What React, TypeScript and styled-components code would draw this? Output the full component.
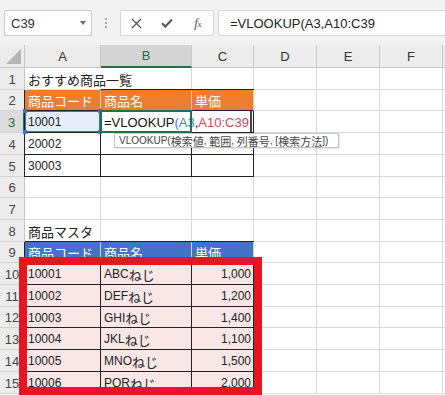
import React from 'react';
import styled, { createGlobalStyle, css } from 'styled-components';

const Global = createGlobalStyle`
  html, body { margin: 0; padding: 0; background: #fff; overflow: hidden; }
  body { width: 445px; height: 395px; }
`;

const Page = styled.div`
  position: relative;
  width: 445px;
  height: 395px;
  overflow: hidden;
  background: #fff;
  font-family: "Liberation Sans", "Noto Sans CJK JP", sans-serif;
  color: #222;
`;

/* ---------- formula bar ---------- */
const Toolbar = styled.div`
  display: flex;
  align-items: stretch;
  height: 45px;
  box-sizing: border-box;
  padding: 10px 0 9px 4px;
  background: #f2f2f2;
`;

const NameBox = styled.div`
  width: 88px;
  box-sizing: border-box;
  display: flex;
  align-items: center;
  justify-content: space-between;
  padding: 0 5px 0 6px;
  background: #fff;
  border: 1px solid #cdcdcd;
  font-size: 13px;
  color: #333;
`;

const Caret = styled.span`
  width: 0;
  height: 0;
  border-left: 3.5px solid transparent;
  border-right: 3.5px solid transparent;
  border-top: 4px solid #666;
`;

const Grip = styled.div`
  width: 28px;
  display: flex;
  align-items: center;
  justify-content: center;
  &::before {
    content: "";
    width: 0;
    height: 10px;
    border-left: 2px dotted #a8a8a8;
  }
`;

const FxBox = styled.div`
  width: 94px;
  box-sizing: border-box;
  display: flex;
  align-items: center;
  background: #fff;
  border: 1px solid #d6d6d6;
`;

const IconSlot = styled.span`
  width: 31px;
  display: flex;
  align-items: center;
  justify-content: center;
  color: #555;
`;

const Fx = styled.span`
  font-family: "Liberation Serif", serif;
  font-style: italic;
  font-size: 13px;
  color: #555;
  letter-spacing: -0.5px;
  & > small { font-size: 9px; }
`;

const FormulaInput = styled.div`
  flex: 1;
  margin-left: 4px;
  display: flex;
  align-items: center;
  padding-left: 11px;
  background: #fff;
  border: 1px solid #d6d6d6;
  border-right: none;
  font-size: 13px;
  color: #222;
  white-space: nowrap;
`;

/* ---------- sheet ---------- */
const Sheet = styled.div`
  display: grid;
  grid-template-columns: 25px 76px 91px 62px 63px 63px 63px 40px;
  grid-template-rows: 23px 22px 21px 22px 22px 22px 21px 22px 22px 21px 22px 22px 21px 22px 22px 22px;
`;

const Corner = styled.div`
  box-sizing: border-box;
  background: #ececec;
  border-right: 1px solid #c4c4c4;
  border-bottom: 1px solid #c4c4c4;
  display: flex;
  align-items: flex-end;
  justify-content: flex-end;
  padding: 0 3px 3px 0;
`;

const ColHead = styled.div<{ $sel?: boolean }>`
  box-sizing: border-box;
  display: flex;
  align-items: center;
  justify-content: center;
  font-size: 13px;
  color: ${p => (p.$sel ? '#1e6b40' : '#333')};
  background: ${p => (p.$sel ? '#d4d4d4' : '#ececec')};
  border-right: 1px solid #c9c9c9;
  border-bottom: ${p => (p.$sel ? '2px solid #217346' : '1px solid #c4c4c4')};
`;

const RowHead = styled.div<{ $sel?: boolean }>`
  box-sizing: border-box;
  display: flex;
  align-items: center;
  justify-content: center;
  padding-top: 1px;
  font-size: 13px;
  color: ${p => (p.$sel ? '#1e6b40' : '#444')};
  background: ${p => (p.$sel ? '#dcdcdc' : '#ececec')};
  border-right: ${p => (p.$sel ? '2px solid #217346' : '1px solid #c4c4c4')};
  border-bottom: 1px solid #d2d2d2;
`;

type Kind = 'plain' | 'orange' | 'table' | 'blue' | 'pink';

const kindStyle: Record<Kind, ReturnType<typeof css>> = {
  plain: css`
    background: #fff;
    border-right: 1px solid #d9d9d9;
    border-bottom: 1px solid #d9d9d9;
  `,
  orange: css`
    background: #ed7d31;
    color: #fff;
    border-right: 1px solid #f7c9a8;
    border-bottom: 1px solid #222;
  `,
  table: css`
    background: #fff;
    border-right: 1px solid #222;
    border-bottom: 1px solid #222;
  `,
  blue: css`
    background: #4472c4;
    color: #fff;
    border-right: 1px solid #c7d4ee;
    border-bottom: 1px solid #222;
  `,
  pink: css`
    background: #f9e6e6;
    border-right: 1px solid #222;
    border-bottom: 1px solid #222;
  `,
};

const Cell = styled.div<{
  $kind: Kind;
  $edgeL?: boolean;
  $edgeT?: boolean;
  $right?: boolean;
  $sel?: boolean;
  $spill?: boolean;
}>`
  box-sizing: border-box;
  display: flex;
  align-items: center;
  justify-content: ${p => (p.$right ? 'flex-end' : 'flex-start')};
  padding: 1px 2px 0 3px;
  font-size: 12px;
  white-space: nowrap;
  ${p => kindStyle[p.$kind]}
  ${p => {
    const shadows: string[] = [];
    if (p.$edgeL) shadows.push('-1px 0 0 #222');
    if (p.$edgeT) shadows.push('0 -1px 0 #222');
    if (p.$sel) shadows.push('inset 0 0 0 1px #3f6fc2');
    return shadows.length ? `box-shadow: ${shadows.join(', ')};` : '';
  }}
  ${p => p.$sel && css`
    position: relative;
    background: #e7edf8;
  `}
  ${p => p.$spill && css`
    z-index: 1;
    background: transparent;
    border-right-color: transparent;
  `}
`;

const Jp = styled.span<{ $size?: number }>`
  font-family: "Noto Sans CJK JP", sans-serif;
  font-size: ${p => p.$size ?? 13}px;
`;

const Handle = styled.span<{ $v: 'top' | 'bottom'; $h: 'left' | 'right' }>`
  position: absolute;
  width: 4px;
  height: 4px;
  background: #3f6fc2;
  ${p => (p.$v === 'top' ? 'top: -2px;' : 'bottom: -2px;')}
  ${p => (p.$h === 'left' ? 'left: -2px;' : 'right: -2px;')}
`;

const EditCell = styled.div`
  position: relative;
  box-sizing: border-box;
  border-right: 1px solid #222;
  border-bottom: 1px solid #222;
  &::after {
    content: "";
    position: absolute;
    left: -1px;
    top: -1px;
    width: 92px;
    height: 23px;
    box-sizing: border-box;
    border: 2px solid #217346;
    z-index: 3;
    pointer-events: none;
  }
`;

const Editor = styled.div`
  position: absolute;
  left: 0;
  top: 0;
  height: 100%;
  width: 151px;
  box-sizing: border-box;
  display: flex;
  align-items: center;
  padding: 1px 0 0 3px;
  background: #fff;
  border-right: 2px solid #444;
  font-size: 13px;
  color: #111;
  white-space: nowrap;
  overflow: hidden;
  z-index: 2;
`;

const Ref = styled.span<{ $c: string }>`
  color: ${p => p.$c};
`;

const Tip = styled.div`
  position: absolute;
  left: 13px;
  top: calc(100% + 1px);
  height: 15px;
  box-sizing: border-box;
  display: flex;
  align-items: center;
  padding: 0 10px 0 4px;
  background: #fff;
  border: 1px solid #c6c6c6;
  box-shadow: 1px 1px 1px rgba(0, 0, 0, 0.08);
  font-size: 10px;
  color: #444;
  white-space: pre;
  z-index: 4;
`;

const Highlight = styled.div`
  position: absolute;
  left: 19px;
  top: 257px;
  width: 243px;
  height: 138px;
  box-sizing: border-box;
  border: 8px solid #e5161f;
  pointer-events: none;
`;

const JP_RE = /([\u3000-\u30ff\u3400-\u9fff\uff00-\uffef]+)/;
const isJp = (s: string) => /^[\u3000-\u30ff\u3400-\u9fff\uff00-\uffef]+$/.test(s);

function Mixed({ text, size }: { text: string; size?: number }) {
  return (
    <>
      {text.split(JP_RE).filter(Boolean).map((s, i) =>
        isJp(s) ? <Jp key={i} $size={size}>{s}</Jp> : <React.Fragment key={i}>{s}</React.Fragment>
      )}
    </>
  );
}

type Row = {
  n: number;
  kind: Kind;
  cells: [string, string, string];
  topEdge?: boolean;
  tableCols: boolean;
  spill?: boolean;
};

const rows: Row[] = [
  { n: 1, kind: 'plain', cells: ['おすすめ商品一覧', '', ''], tableCols: false, spill: true },
  { n: 2, kind: 'orange', cells: ['商品コード', '商品名', '単価'], topEdge: true, tableCols: true },
  { n: 3, kind: 'table', cells: ['10001', '', ''], tableCols: true },
  { n: 4, kind: 'table', cells: ['20002', '', ''], tableCols: true },
  { n: 5, kind: 'table', cells: ['30003', '', ''], tableCols: true },
  { n: 6, kind: 'plain', cells: ['', '', ''], tableCols: false },
  { n: 7, kind: 'plain', cells: ['', '', ''], tableCols: false },
  { n: 8, kind: 'plain', cells: ['商品マスタ', '', ''], tableCols: false },
  { n: 9, kind: 'blue', cells: ['商品コード', '商品名', '単価'], topEdge: true, tableCols: true },
  { n: 10, kind: 'pink', cells: ['10001', 'ABCねじ', '1,000'], tableCols: true },
  { n: 11, kind: 'pink', cells: ['10002', 'DEFねじ', '1,200'], tableCols: true },
  { n: 12, kind: 'pink', cells: ['10003', 'GHIねじ', '1,400'], tableCols: true },
  { n: 13, kind: 'pink', cells: ['10004', 'JKLねじ', '1,100'], tableCols: true },
  { n: 14, kind: 'pink', cells: ['10005', 'MNOねじ', '1,500'], tableCols: true },
  { n: 15, kind: 'pink', cells: ['10006', 'PQRねじ', '2,000'], tableCols: true },
];

const cols = ['A', 'B', 'C', 'D', 'E', 'F', 'G'];
const emptyCols = ['D', 'E', 'F', 'G'];

function XIcon() {
  return (
    <svg width="11" height="11" viewBox="0 0 11 11">
      <path d="M1 1 L10 10 M10 1 L1 10" stroke="#555" strokeWidth="1.3" fill="none" />
    </svg>
  );
}

function CheckIcon() {
  return (
    <svg width="12" height="10" viewBox="0 0 12 10">
      <path d="M1 5.2 L4.3 8.5 L11 1.5" stroke="#555" strokeWidth="2" fill="none" />
    </svg>
  );
}

function SheetRow({ row }: { row: Row }) {
  const isRow3 = row.n === 3;
  return (
    <>
      <RowHead $sel={isRow3}>{row.n}</RowHead>
      {row.cells.map((text, ci) => {
        if (isRow3 && ci === 1) {
          return (
            <EditCell key={ci}>
              <Editor>
                =VLOOKUP<Ref $c="#3f7bd1">(A3</Ref>,<Ref $c="#e0405a">A10:C39</Ref>
              </Editor>
              <Tip>
                <Mixed text="VLOOKUP(検索値, 範囲, 列番号, [検索方法])" size={11} />
              </Tip>
            </EditCell>
          );
        }
        const right = ci === 2 && row.kind === 'pink';
        return (
          <Cell
            key={ci}
            $kind={row.kind}
            $edgeL={row.tableCols && ci === 0}
            $edgeT={row.topEdge}
            $right={right}
            $sel={isRow3 && ci === 0}
            $spill={row.spill && ci === 0}
          >
            <Mixed text={text} />
            {isRow3 && ci === 0 && (
              <>
                <Handle $v="top" $h="left" />
                <Handle $v="top" $h="right" />
                <Handle $v="bottom" $h="left" />
                <Handle $v="bottom" $h="right" />
              </>
            )}
          </Cell>
        );
      })}
      {emptyCols.map(c => (
        <Cell key={c} $kind="plain" />
      ))}
    </>
  );
}

export default function App() {
  return (
    <Page>
      <Global />
      <Toolbar>
        <NameBox>
          C39
          <Caret />
        </NameBox>
        <Grip />
        <FxBox>
          <IconSlot><XIcon /></IconSlot>
          <IconSlot><CheckIcon /></IconSlot>
          <IconSlot>
            <Fx>f<small>x</small></Fx>
          </IconSlot>
        </FxBox>
        <FormulaInput>=VLOOKUP(A3,A10:C39</FormulaInput>
      </Toolbar>
      <Sheet>
        <Corner>
          <svg width="15" height="15" viewBox="0 0 15 15">
            <polygon points="15,0 15,15 0,15" fill="#b5b5b5" />
          </svg>
        </Corner>
        {cols.map(c => (
          <ColHead key={c} $sel={c === 'B'}>{c}</ColHead>
        ))}
        {rows.map(r => (
          <SheetRow key={r.n} row={r} />
        ))}
      </Sheet>
      <Highlight />
    </Page>
  );
}
